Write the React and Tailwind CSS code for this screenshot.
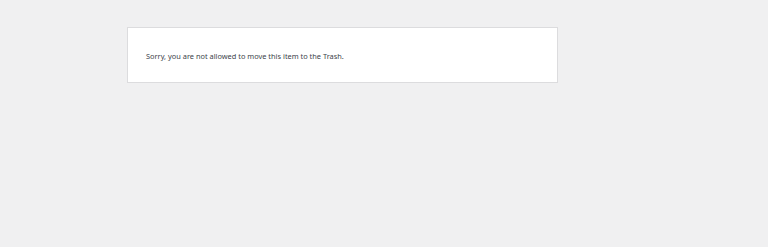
export default function App() {
  return (
    <div className="min-h-[247px] bg-[#f0f0f1] pt-[27px] font-['Noto_Sans',sans-serif]">
      <div className="ml-[127px] w-[431px] h-[56px] bg-white border border-[#dcdcde] flex items-center px-[18px]">
        <p className="text-[7.4px] leading-[13px] pt-[3px] text-[#3c434a]">
          Sorry, you are not allowed to move this item to the Trash.
        </p>
      </div>
    </div>
  );
}
